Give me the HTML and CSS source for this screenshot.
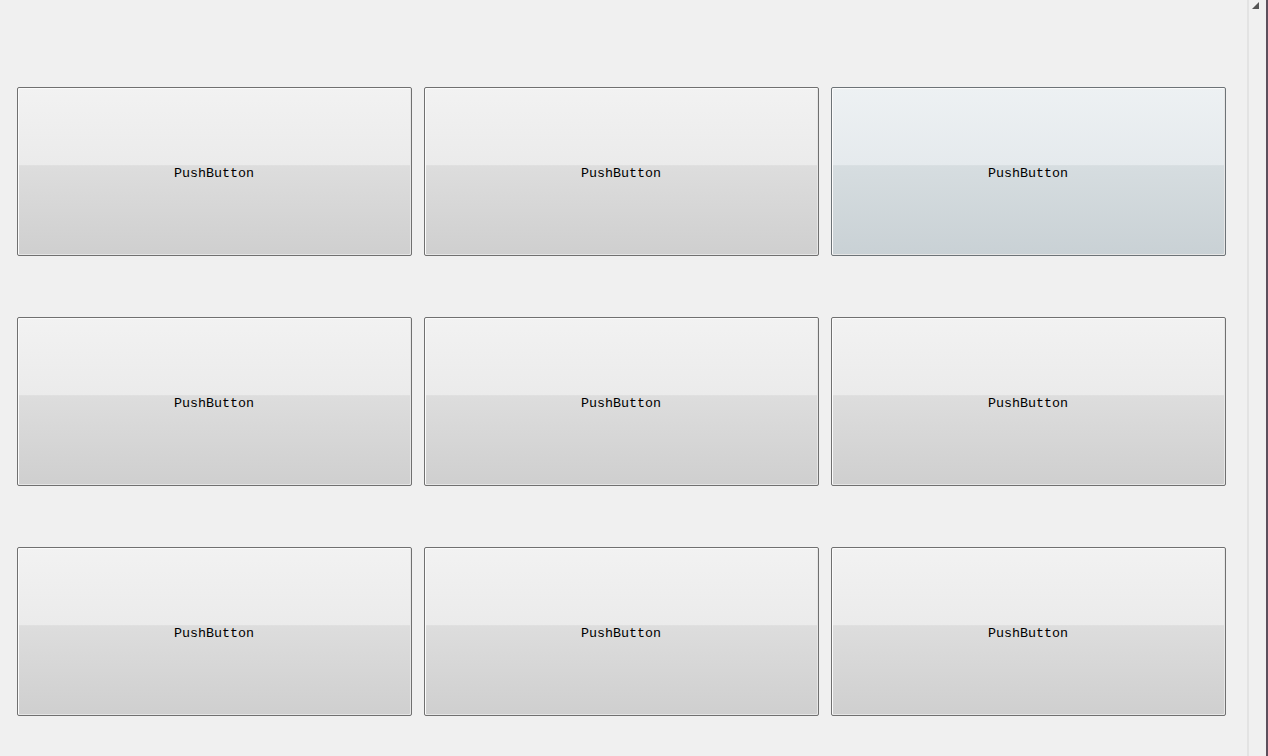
FILE: index.html
```html
<!DOCTYPE html>
<html>
<head>
<meta charset="utf-8">
<link rel="stylesheet" href="styles.css">
</head>
<body>
<div class="window">
  <main class="content">
    <div class="grid">
      <button class="push">PushButton</button>
      <button class="push">PushButton</button>
      <button class="push hover">PushButton</button>
      <button class="push">PushButton</button>
      <button class="push">PushButton</button>
      <button class="push">PushButton</button>
      <button class="push">PushButton</button>
      <button class="push">PushButton</button>
      <button class="push">PushButton</button>
    </div>
  </main>
  <aside class="side">
    <svg class="grip" width="7" height="7" viewBox="0 0 7 7"><polygon points="7,0 7,7 0,7" fill="#555"/></svg>
  </aside>
  <div class="edge"></div>
</div>
</body>
</html>
```
FILE: styles.css
```css
html, body {
  margin: 0;
  padding: 0;
  background: #f0f0f0;
  width: 1268px;
  height: 756px;
  overflow: hidden;
}
.window {
  display: flex;
  width: 1268px;
  height: 756px;
}
.content {
  width: 1247px;
  flex: none;
}
.grid {
  display: grid;
  grid-template-columns: repeat(3, 395px);
  grid-auto-rows: 169px;
  column-gap: 12px;
  row-gap: 61px;
  padding: 87px 0 0 17px;
}
.push {
  box-sizing: border-box;
  margin: 0;
  padding: 0;
  border: 1px solid #707070;
  border-radius: 2px;
  box-shadow: inset 1px 1px 0 #fbfbfb, inset -1px -1px 0 #e6e6e6;
  background: linear-gradient(to bottom, #f2f2f2 0%, #ebebeb 46%, #dddddd 46.5%, #cfcfcf 100%);
  font-family: "Liberation Mono", "DejaVu Sans Mono", monospace;
  font-size: 13.33px;
  color: #000;
  display: flex;
  align-items: center;
  justify-content: center;
  padding-top: 3px;
  padding-right: 1px;
}
.push.hover {
  border-color: #6d7377;
  background: linear-gradient(to bottom, #edf1f3 0%, #e5eaed 46%, #d6dde0 46.5%, #c9d1d5 100%);
}
.side {
  flex: none;
  border-left: 2px solid #e3e3e3;
  box-sizing: border-box;
  width: 19px;
  position: relative;
}
.grip {
  position: absolute;
  left: 3px;
  top: 2px;
}
.edge {
  width: 2px;
  flex: none;
  background: #5c4f5c;
}
```
